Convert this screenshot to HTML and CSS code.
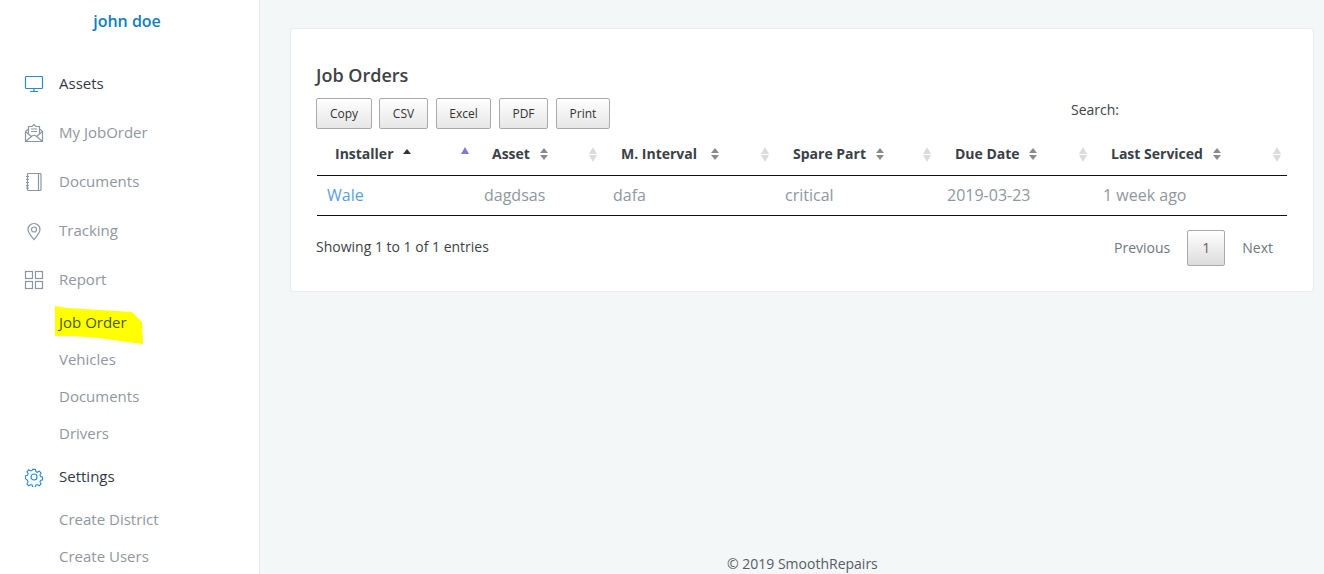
FILE: index.html
```html
<!DOCTYPE html>
<html>
<head>
<meta charset="utf-8">
<title>Job Orders - SmoothRepairs</title>
<link rel="stylesheet" href="styles.css">
</head>
<body>
<div class="sidebar">
  <div class="username">john doe</div>
  <ul class="nav">
    <li class="nav-item dark">
      <svg class="icon blue" viewBox="0 0 20 20"><rect x="1.5" y="2.5" width="17" height="12" rx="0.8"/><path d="M10 14.5v3M6 17.5h8"/></svg>
      Assets
    </li>
    <li class="nav-item">
      <svg class="icon" viewBox="0 0 20 20"><path d="M1.500 8.500v10h17v-10l-3-2.500M1.500 8.500l3-2.500M1.500 8.500l6 5M18.500 8.500l-6 5M1.500 18.500l6.500-5.500q2-1.500 4 0l6.500 5.500"/><path d="M4.500 10.500v-7h3.500l2-2 2 2h3.500v7M7 6h6M7 8.500h6"/></svg>
      My JobOrder
    </li>
    <li class="nav-item">
      <svg class="icon" viewBox="0 0 20 20"><rect x="3.500" y="1.500" width="13.500" height="17" rx="0.800"/><path d="M14.500 1.500v17M2 4.500h3M2 7.500h3M2 10.500h3M2 13.500h3M2 16h3"/></svg>
      Documents
    </li>
    <li class="nav-item">
      <svg class="icon" viewBox="0 0 20 20"><path d="M10 18.500c-3-3.500-6-6.500-6-10a6 6 0 0 1 12 0c0 3.500-3 6.500-6 10z"/><circle cx="10" cy="8.500" r="2.500"/></svg>
      Tracking
    </li>
    <li class="nav-item">
      <svg class="icon" viewBox="0 0 20 20"><rect x="1.500" y="1.500" width="7" height="7"/><rect x="11.500" y="1.500" width="7" height="7"/><rect x="1.500" y="11.500" width="7" height="7"/><rect x="11.500" y="11.500" width="7" height="7"/></svg>
      Report
    </li>
    <li class="sub-item highlighted">
      <svg class="marker" viewBox="0 0 92 41"><path d="M2 2L14 4L47 6L79 8L89 18L90 40L74 38L47 34L20 32L2 32Z"/></svg>
      <span>Job Order</span>
    </li>
    <li class="sub-item">Vehicles</li>
    <li class="sub-item">Documents</li>
    <li class="sub-item">Drivers</li>
    <li class="nav-item dark">
      <svg class="icon blue" viewBox="0 0 20 20"><path d="M8.500 1.500h3l.5 2.500 1.700.8 2.200-1.300 2 2.200-1.300 2.100.6 1.700 2.300.7v3l-2.300.6-.6 1.700 1.300 2.100-2 2.100-2.200-1.300-1.700.7-.5 2.300h-3l-.5-2.300-1.700-.7-2.200 1.300-2-2.100 1.300-2.100-.7-1.700L.5 11.700v-3l2.300-.7.700-1.700L2.200 4.200l2-2.200 2.200 1.300 1.600-.8z" transform="translate(1 1) scale(.9)"/><circle cx="10" cy="10" r="3"/></svg>
      Settings
    </li>
    <li class="sub-item">Create District</li>
    <li class="sub-item">Create Users</li>
  </ul>
</div>

<div class="main">
  <div class="card">
    <h2 class="card-title">Job Orders</h2>
    <div class="toolbar">
      <div class="buttons">
        <button class="btn btn-copy">Copy</button>
        <button class="btn btn-csv">CSV</button>
        <button class="btn btn-excel">Excel</button>
        <button class="btn btn-pdf">PDF</button>
        <button class="btn btn-print">Print</button>
      </div>
      <label class="search">Search:</label>
    </div>
    <table class="orders">
      <colgroup>
        <col class="c1"><col class="c2"><col class="c3"><col class="c4"><col class="c5"><col class="c6">
      </colgroup>
      <thead>
        <tr>
          <th><span class="cell-head">Installer <i class="caret-up"></i></span><i class="edge-up"></i></th>
          <th><span class="cell-head">Asset <i class="updown"></i></span><i class="edge"></i></th>
          <th><span class="cell-head">M. Interval <i class="updown wide"></i></span><i class="edge"></i></th>
          <th><span class="cell-head">Spare Part <i class="updown"></i></span><i class="edge"></i></th>
          <th><span class="cell-head">Due Date <i class="updown"></i></span><i class="edge"></i></th>
          <th><span class="cell-head">Last Serviced <i class="updown"></i></span><i class="edge"></i></th>
        </tr>
      </thead>
      <tbody>
        <tr>
          <td><a href="#">Wale</a></td>
          <td>dagdsas</td>
          <td>dafa</td>
          <td>critical</td>
          <td>2019-03-23</td>
          <td>1 week ago</td>
        </tr>
      </tbody>
    </table>
    <div class="table-foot">
      <div class="info">Showing 1 to 1 of 1 entries</div>
      <div class="pager">
        <span class="page-link">Previous</span>
        <span class="page-current">1</span>
        <span class="page-link">Next</span>
      </div>
    </div>
  </div>
  <div class="footer">© 2019 SmoothRepairs</div>
</div>
</body>
</html>
```

FILE: styles.css
```css
html, body { margin: 0; height: 100%; overflow: hidden; }
body { display: flex; font-family: "Open Sans", sans-serif; font-size: 14px; color: #3e4b5b; background: #f4f7f8; }

.sidebar { width: 259px; height: 574px; flex: none; overflow: hidden; background: #fff; border-right: 1px solid #e7ebee; }
.username { text-align: center; font-size: 16px; font-weight: 600; color: #0f7fc0; line-height: 22px; padding: 10px 5px 0 0; }

.nav { list-style: none; margin: 27px 0 0; padding: 0; }
.nav-item { display: flex; align-items: center; height: 49px; box-sizing: border-box; padding: 0 0 2px 24px; font-size: 15px; color: #8f979f; }
.nav-item.dark { color: #2f3a46; }
.sub-item { position: relative; height: 37px; line-height: 37px; padding-left: 59px; font-size: 15px; color: #8f979f; }
.sub-item.highlighted { color: #4a5a1c; }
.sub-item span { position: relative; }
.marker { position: absolute; left: 53px; top: 0; width: 92px; height: 41px; }
.marker path { fill: #ffff00; }

.icon { width: 20px; height: 20px; margin: 2px 15px 0 0; flex: none; fill: none; stroke: #8a96a1; stroke-width: 1.2; }
.icon.blue { stroke: #2b8ad8; }

.main { flex: 1; display: flex; flex-direction: column; height: 574px; padding: 28px 10px 0 30px; box-sizing: border-box; }
.card { background: #fff; border: 1px solid #e8ecef; border-radius: 4px; height: 264px; box-sizing: border-box; padding: 34px 26px 0 25px; }
.card-title { margin: 0; font-size: 18px; font-weight: 600; line-height: 24px; color: #3e4246; }

.toolbar { display: flex; justify-content: space-between; margin-top: 11px; height: 31px; }
.buttons { display: flex; gap: 8px; }
.btn { height: 31px; padding: 0; font-family: "Open Sans", sans-serif; font-size: 12px; color: #333; border: 1px solid #aaa; border-radius: 2px; background: linear-gradient(#fff, #e6e6e6); }
.btn-copy { width: 56px; margin-right: -1px; }
.btn-csv { width: 49px; }
.btn-excel { width: 55px; }
.btn-pdf { width: 49px; }
.btn-print { width: 54px; }
.search { margin: 0 168px 0 0; line-height: 24px; color: #3e4246; }

.orders { width: 970px; table-layout: fixed; border-collapse: collapse; margin: 9px 0 0 1px; }
.c1 { width: 157px; }
.c2 { width: 129px; }
.c3 { width: 172px; }
.c4 { width: 162px; }
.c5 { width: 156px; }
.c6 { width: 194px; }
.orders th { position: relative; height: 37px; padding: 0 0 5px 18px; text-align: left; font-size: 14px; font-weight: 700; color: #3a4047; border-bottom: 1px solid #111; box-sizing: border-box; }
.orders td { height: 40px; padding: 0 0 0 10px; font-size: 16px; color: #8f979f; border-bottom: 1px solid #111; box-sizing: border-box; }
.orders a { color: #5a9fdc; text-decoration: none; }
.cell-head { white-space: nowrap; }

.updown { display: inline-block; position: relative; width: 9px; height: 12px; margin-left: 6px; vertical-align: -1px; }
.updown.wide { margin-left: 10px; }
.updown::before, .updown::after, .edge::before, .edge::after { content: ""; position: absolute; left: 0; border-left: 4.500px solid transparent; border-right: 4.500px solid transparent; }
.updown::before { top: 0; border-bottom: 5px solid #8b8b8b; }
.updown::after { bottom: 0; border-top: 5px solid #8b8b8b; }
.caret-up { display: inline-block; width: 0; height: 0; margin-left: 6px; border-left: 4.500px solid transparent; border-right: 4.500px solid transparent; border-bottom: 5px solid #333; vertical-align: 5px; }

.edge { position: absolute; right: 5px; top: 9px; width: 9px; height: 15px; }
.edge::before { top: 0; border-bottom: 7px solid #dcdcdc; }
.edge::after { bottom: 0; border-top: 7px solid #dcdcdc; }
.edge-up { position: absolute; right: 5px; top: 9px; width: 0; height: 0; border-left: 4.500px solid transparent; border-right: 4.500px solid transparent; border-bottom: 7px solid #7b7bd6; }

.table-foot { display: flex; justify-content: space-between; align-items: center; margin-top: 14px; }
.info { color: #3e4246; margin-top: -2px; }
.pager { display: flex; align-items: center; }
.page-link { padding: 0 14px; color: #6f7780; }
.page-current { width: 38px; height: 36px; line-height: 34px; box-sizing: border-box; margin: 0 3px; text-align: center; font-size: 14px; color: #6f6060; border: 1px solid #aaa; border-radius: 2px; background: linear-gradient(#fff, #dcdcdc); }

.footer { margin-top: auto; margin-left: 437px; height: 20px; line-height: 20px; color: #555d66; }
```
